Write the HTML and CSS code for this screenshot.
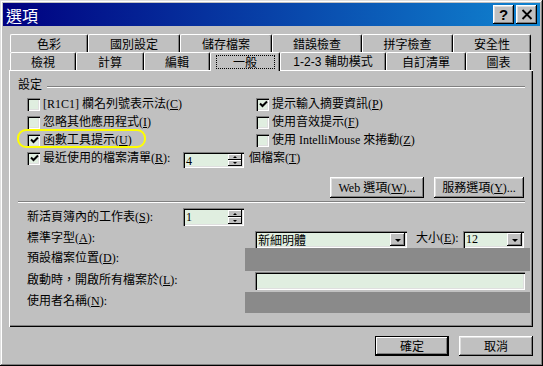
FILE: index.html
```html
<!DOCTYPE html>
<html lang="zh-Hant">
<head>
<meta charset="utf-8">
<title>選項</title>
<link rel="stylesheet" href="styles.css">
</head>
<body>
<div class="window">
  <div class="titlebar">
    <span class="title">選項</span>
    <div class="tbtns">
      <span class="tbtn help">?</span>
      <span class="tbtn close"><svg width="12" height="11" viewBox="0 0 12 11"><path d="M1.5 1 L10.5 10 M10.5 1 L1.5 10" stroke="#000" stroke-width="1.8" fill="none"/></svg></span>
    </div>
  </div>

  <div class="content">
    <div class="tabs">
      <div class="tabrow back">
        <div class="tab">色彩</div>
        <div class="tab">國別設定</div>
        <div class="tab">儲存檔案</div>
        <div class="tab">錯誤檢查</div>
        <div class="tab">拼字檢查</div>
        <div class="tab">安全性</div>
      </div>
      <div class="tabrow front">
        <div class="tab">檢視</div>
        <div class="tab">計算</div>
        <div class="tab">編輯</div>
        <div class="tab sel"><span class="focus">一般</span></div>
        <div class="tab sans">1-2-3 輔助模式</div>
        <div class="tab">自訂清單</div>
        <div class="tab">圖表</div>
      </div>
    </div>

    <div class="panel">
      <div class="group-head"><span>設定</span><i class="etch grow"></i></div>

      <div class="checks">
        <div class="chk"><span class="box"></span><span>[R1C1] 欄名列號表示法(<u>C</u>)</span></div>
        <div class="chk"><span class="box"><svg width="9" height="9" viewBox="0 0 9 9"><path d="M1 3.5 L3.5 6 L8 1.5" stroke="#000" stroke-width="2" fill="none"/></svg></span><span>提示輸入摘要資訊(<u>P</u>)</span></div>
        <div class="chk"><span class="box"></span><span>忽略其他應用程式(<u>I</u>)</span></div>
        <div class="chk"><span class="box"></span><span>使用音效提示(<u>F</u>)</span></div>
        <div class="chk hl"><span class="box"><svg width="9" height="9" viewBox="0 0 9 9"><path d="M1 3.5 L3.5 6 L8 1.5" stroke="#000" stroke-width="2" fill="none"/></svg></span><span>函數工具提示(<u>U</u>)</span><span class="ring"></span></div>
        <div class="chk"><span class="box"></span><span>使用 IntelliMouse 來捲動(<u>Z</u>)</span></div>
        <div class="recent">
          <div class="chk lead"><span class="box"><svg width="9" height="9" viewBox="0 0 9 9"><path d="M1 3.5 L3.5 6 L8 1.5" stroke="#000" stroke-width="2" fill="none"/></svg></span><span>最近使用的檔案清單(<u>R</u>):</span></div>
          <div class="spin sp-recent"><span class="val">4</span><span class="arrows"><i class="up"></i><i class="dn"></i></span></div>
          <span class="after">個檔案(<u>T</u>)</span>
        </div>
      </div>

      <div class="opts">
        <span class="btn w94">Web 選項(<u>W</u>)...</span>
        <span class="btn w90">服務選項(<u>Y</u>)...</span>
      </div>

      <i class="etch sep"></i>

      <div class="form">
        <div class="row r1">
          <span class="lbl w156">新活頁簿內的工作表(<u>S</u>):</span>
          <div class="spin sp-sheets"><span class="val">1</span><span class="arrows"><i class="up"></i><i class="dn"></i></span></div>
        </div>
        <div class="row r2">
          <span class="lbl w228">標準字型(<u>A</u>):</span>
          <div class="combo c-font"><span class="val">新細明體</span><span class="dd"><i></i></span></div>
          <span class="lbl size">大小(<u>E</u>):</span>
          <div class="combo c-size"><span class="val">12</span><span class="dd"><i></i></span></div>
        </div>
        <div class="row r3">
          <span class="lbl w218 up4">預設檔案位置(<u>D</u>):</span>
          <div class="disabled"></div>
        </div>
        <div class="row r4">
          <span class="lbl w228 up4">啟動時，開啟所有檔案於(<u>L</u>):</span>
          <div class="text"></div>
        </div>
        <div class="row r5">
          <span class="lbl w218 up4">使用者名稱(<u>N</u>):</span>
          <div class="disabled"></div>
        </div>
      </div>
    </div>

    <div class="actions">
      <span class="btn dlg default">確定</span>
      <span class="btn dlg">取消</span>
    </div>
  </div>
</div>
</body>
</html>
```
FILE: styles.css
```css
* { box-sizing: border-box; }
html, body { margin: 0; padding: 0; }
body {
  width: 543px;
  height: 366px;
  overflow: hidden;
  background: #c0c0c0;
  font-family: "Liberation Serif", "Noto Sans CJK TC", serif;
  font-size: 12px;
  line-height: 14px;
  color: #000;
}
u { text-decoration: underline; }

.window {
  width: 543px;
  height: 366px;
  padding: 3px;
  background: #c0c0c0;
  display: flex;
  flex-direction: column;
  box-shadow: inset -1px -1px #000, inset 1px 1px #dfdfdf, inset -2px -2px #808080, inset 2px 2px #fff;
}

/* title bar */
.titlebar {
  height: 23px;
  flex: none;
  display: flex;
  align-items: center;
  padding: 0 3px 0 3px;
  background: linear-gradient(to right, #000080, #1084d0);
}
.title {
  flex: 1;
  color: #fff;
  font-family: "Noto Sans CJK TC", sans-serif;
  font-size: 16px;
  line-height: 18px;
}
.tbtns { display: flex; gap: 2px; }
.tbtn {
  width: 21px;
  height: 19px;
  background: #c0c0c0;
  display: flex;
  align-items: center;
  justify-content: center;
  box-shadow: inset -1px -1px #000, inset 1px 1px #fff, inset -2px -2px #808080, inset 2px 2px #dfdfdf;
}
.help {
  font-family: "Liberation Sans", sans-serif;
  font-weight: bold;
  font-size: 15px;
  line-height: 15px;
  padding-bottom: 1px;
}

.content {
  flex: 1;
  display: flex;
  flex-direction: column;
  padding: 8px 7px 0 6px;
}

/* tabs */
.tabs { margin-left: 1px; width: 521px; }
.tabrow { display: grid; height: 18px; }
.tabrow.back { grid-template-columns: 78px 92px 92px 90px 91px 78px; }
.tabrow.front { grid-template-columns: 66px 68px 66px 70px 106px 80px 65px; }
.tab {
  background: #c0c0c0;
  border-top: 1px solid #fff;
  border-left: 1px solid #fff;
  border-right: 1px solid #000;
  border-radius: 2px 2px 0 0;
  box-shadow: inset -1px 0 #808080;
  display: flex;
  align-items: center;
  justify-content: center;
  white-space: nowrap;
  font-family: "Noto Sans CJK TC", sans-serif;
}
.tab.sans { font-family: "Liberation Sans", "Noto Sans CJK TC", sans-serif; }
.tab.sel {
  position: relative;
  z-index: 1;
  height: 19px;
  margin-bottom: -1px;
}
.focus {
  display: inline-block;
  width: 59px;
  height: 14px;
  line-height: 12px;
  text-align: center;
  border: 1px dotted #000;
}

/* main panel */
.panel {
  height: 257px;
  flex: none;
  padding: 7px 8px 0 9px;
  box-shadow: inset 1px 1px #fff, inset -1px -1px #000, inset -2px -2px #808080;
  display: flex;
  flex-direction: column;
}
.group-head {
  height: 14px;
  display: flex;
  align-items: center;
  font-family: "Noto Sans CJK TC", sans-serif;
}
.etch {
  display: block;
  height: 2px;
  border-top: 1px solid #808080;
  border-bottom: 1px solid #fff;
}
.etch.grow { flex: 1; margin-left: 5px; margin-top: 6px; }
.etch.sep { margin-top: 3px; }

.checks {
  margin-top: 4px;
  margin-left: 9px;
  display: grid;
  grid-template-columns: 229px 1fr;
  grid-auto-rows: 18px;
}
.chk {
  display: flex;
  align-items: center;
  gap: 3px;
  white-space: nowrap;
}
.box {
  width: 13px;
  height: 13px;
  flex: none;
  background: #e0eee0;
  display: flex;
  align-items: center;
  justify-content: center;
  box-shadow: inset 1px 1px #808080, inset 2px 2px #000, inset -1px -1px #fff, inset -2px -2px #dfdfdf;
}
.box svg { margin: 1px 0 0 1px; }
.hl { position: relative; }
.ring {
  position: absolute;
  left: -10px;
  top: -2px;
  width: 129px;
  height: 19px;
  border: 2px solid #ffff00;
  border-radius: 9px;
}
.recent {
  grid-column: 1 / -1;
  display: flex;
  align-items: center;
}
.recent .lead { width: 156px; }
.after { margin-left: 5px; white-space: nowrap; }

/* spin box */
.spin {
  display: flex;
  width: 61px;
  padding: 2px 2px 2px 3px;
  background: #e0eee0;
  box-shadow: inset 1px 1px #808080, inset 2px 2px #000, inset -1px -1px #fff, inset -2px -2px #dfdfdf;
}
.sp-recent { height: 16px; margin-top: 4px; }
.sp-sheets { height: 18px; }
.spin .val { flex: 1; line-height: 12px; padding-top: 1px; }
.arrows {
  width: 14px;
  display: flex;
  flex-direction: column;
}
.arrows i {
  flex: 1;
  display: flex;
  align-items: center;
  justify-content: center;
  background: #c0c0c0;
  box-shadow: inset -1px -1px #000, inset 1px 1px #fff;
}
.arrows i::after {
  content: "";
  border-left: 2px solid transparent;
  border-right: 2px solid transparent;
}
.arrows .up::after { border-bottom: 2px solid #000; }
.arrows .dn::after { border-top: 2px solid #000; }

/* buttons */
.btn {
  display: flex;
  align-items: center;
  justify-content: center;
  background: #c0c0c0;
  white-space: nowrap;
  box-shadow: inset -1px -1px #000, inset 1px 1px #fff, inset -2px -2px #808080, inset 2px 2px #dfdfdf;
}
.opts {
  margin-top: 10px;
  margin-right: 1px;
  display: flex;
  justify-content: flex-end;
  gap: 10px;
}
.w94 { width: 94px; height: 21px; }
.w90 { width: 90px; height: 21px; }

/* lower form */
.form {
  margin-top: 4px;
  margin-left: 9px;
  margin-right: -5px;
  display: flex;
  flex-direction: column;
}
.row { display: flex; align-items: center; }
.r1 { height: 20px; }
.r2 { height: 21px; }
.r3 { height: 23px; align-items: stretch; }
.r4 { height: 21px; align-items: flex-start; }
.r5 { height: 21px; align-items: stretch; }
.lbl { white-space: nowrap; flex: none; }
.r3 .lbl, .r5 .lbl { align-self: center; }
.r4 .lbl { align-self: center; }
.up4 { padding-bottom: 4px; }
.w156 { width: 156px; }
.w228 { width: 228px; }
.w218 { width: 218px; }
.size { margin-left: 9px; width: 47px; }

.combo {
  display: flex;
  height: 17px;
  margin-top: 4px;
  padding: 2px;
  background: #e0eee0;
  box-shadow: inset 1px 1px #808080, inset 2px 2px #000, inset -1px -1px #fff, inset -2px -2px #dfdfdf;
}
.c-font { width: 152px; font-family: "Noto Sans CJK TC", sans-serif; }
.c-size { width: 61px; }
.combo .val { flex: 1; padding-left: 1px; line-height: 13px; }
.dd {
  width: 15px;
  display: flex;
  align-items: center;
  justify-content: center;
  background: #c0c0c0;
  box-shadow: inset -1px -1px #000, inset 1px 1px #fff, inset -2px -2px #808080;
}
.dd i {
  display: block;
  border-left: 3px solid transparent;
  border-right: 3px solid transparent;
  border-top: 3px solid #000;
  margin-top: 1px;
}

.disabled { flex: 1; background: #8a8a8a; }
.text {
  width: 270px;
  height: 18px;
  margin-top: 1px;
  background: #e0eee0;
  box-shadow: inset 1px 1px #808080, inset 2px 2px #000, inset -1px -1px #fff, inset -2px -2px #dfdfdf;
}

/* dialog buttons */
.actions {
  margin-top: 9px;
  display: flex;
  justify-content: flex-end;
  gap: 10px;
}
.dlg { width: 74px; height: 20px; font-family: "Noto Sans CJK TC", sans-serif; }
.dlg.default {
  box-shadow: inset 0 0 0 1px #000, inset -2px -2px #000, inset 2px 2px #fff, inset -3px -3px #808080;
}
```
